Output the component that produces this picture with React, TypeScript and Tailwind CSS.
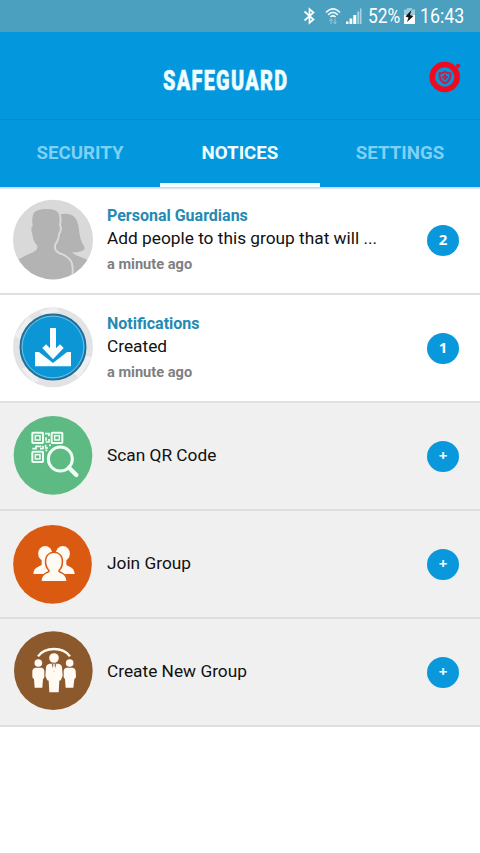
import type { ReactNode } from "react";

function StatusBar() {
  return (
    <div className="h-8 bg-[#4b9fbf] flex items-center text-white">
      <svg className="ml-[300px] h-8 w-[66px] shrink-0" viewBox="0 0 66 32" fill="none">
        {/* bluetooth */}
        <path d="M4.5 11.5L13.5 19.5L9.5 23V9L13.5 12.5L4.5 20.5" stroke="white" strokeWidth="1.7" />
        {/* wifi */}
        <path d="M26 12.5Q33 5.5 40 12.5M28.2 14.8Q33 10 37.8 14.8M30.4 17Q33 14.5 35.6 17" stroke="#e9f7fb" strokeWidth="1.7" />
        <path d="M31 19V24M29.3 20.8L31 18.8L32.7 20.8M35 18.5V23.5M33.3 21.8L35 23.8L36.7 21.8" stroke="#94cbe0" strokeWidth="1" />
        {/* signal */}
        <path d="M46 21.5H48.5V24H46zM49.5 18.5H52.3V24H49.5zM53.3 15H56.3V24H53.3z" fill="white" />
        <path d="M57.3 11.5H59.3V24H57.3zM60 8.5H61.5V24H60z" fill="#a9d3e3" />
      </svg>
      <span className="w-[36px] ml-[2px] text-[20px] leading-8 origin-left scale-x-[0.87] whitespace-nowrap">52%</span>
      <svg className="h-8 w-[14px] shrink-0" viewBox="0 0 14 32">
        <path d="M3 8H8V9.5H11V24H0V9.5H3z" fill="#9ccbdc" />
        <path d="M0 15H11V24H0z" fill="white" />
        <path d="M7.5 10L1.5 16.5L4.5 17.5L3 22L9.5 16L6 15z" fill="#10151a" />
      </svg>
      <span className="ml-[2px] text-[20px] leading-8 origin-left scale-x-[0.89] whitespace-nowrap">16:43</span>
    </div>
  );
}

function Header() {
  return (
    <div className="h-[88px] flex items-center border-b border-[#078bd0]">
      <h1 className="ml-[163px] mt-[10px] w-[263px] text-[27.5px] leading-[36px] font-black tracking-[1.8px] text-[#f0fdff] origin-left scale-x-[0.722] whitespace-nowrap [-webkit-text-stroke:0.5px_#f0fdff]">
        SAFEGUARD
      </h1>
      <svg className="ml-[1px] mt-[3px] w-[38px] h-[38px]" viewBox="0 0 38 38" fill="none">
        <circle cx="17.7" cy="19" r="12.5" stroke="#ed0b20" strokeWidth="5.6" />
        <path d="M29 7.3L31.2 6L33.3 7.5L31 10.2z" fill="#ed0b20" stroke="#ed0b20" />
        <path d="M12.5 15.2Q15.5 15.5 18 13.7Q20.5 15.5 23.5 15.2Q24 22.8 18 25.2Q12 22.8 12.5 15.2z" stroke="#c41f45" strokeWidth="2" />
        <path d="M18 16.3V22.3M15 19.3H21" stroke="#c41f45" strokeWidth="2" />
      </svg>
    </div>
  );
}

const tabs = [
  { label: "SECURITY", active: false },
  { label: "NOTICES", active: true },
  { label: "SETTINGS", active: false },
];

function Tabs() {
  return (
    <div className="flex h-[67px]">
      {tabs.map((t) => (
        <div
          key={t.label}
          className={`flex-1 flex items-center justify-center border-b-4 text-[18.7px] font-bold ${
            t.active ? "border-[#f4fffd] text-[#f4fffd]" : "border-transparent text-[#7fd0f5]"
          }`}
        >
          <span className="mt-[3px]">{t.label}</span>
        </div>
      ))}
    </div>
  );
}

function GuardiansIcon() {
  return (
    <svg className="w-[107px] h-[106px] shrink-0" viewBox="0 -9 321 318">
      <clipPath id="guardians">
        <circle cx="159" cy="149" r="119" />
      </clipPath>
      <circle cx="159" cy="149" r="120" fill="#d9d9d9" />
      <g clipPath="url(#guardians)">
        <path d="M180 73Q204 68 219 77Q235 89 237 121Q240 151 252 168Q258 178 246 183Q232 188 215 187Q219 193 240 200Q262 207 277 220V275H217V235Q217 215 195 198L165 178Z" fill="#b3b3b3" />
        <path
          d="M40 280V213Q70 196 91 187Q111 181 109 168Q96 155 94 132Q91 126 91 118Q91 110 95 106Q91 82 99 67Q110 54 139 54Q169 54 178 68Q184 83 180 107Q184 110 182 120Q181 129 177 132Q176 151 166 163Q161 181 177 189Q200 197 210 209Q218 219 218 240V280Z"
          fill="#b3b3b3"
          stroke="#d9d9d9"
          strokeWidth="6"
        />
      </g>
    </svg>
  );
}

function NotificationsIcon() {
  return (
    <svg className="w-[107px] h-[106px] shrink-0" viewBox="0 0 321 318">
      <clipPath id="notifications">
        <circle cx="159" cy="157" r="120" />
      </clipPath>
      <circle cx="159" cy="157" r="120" fill="#e2e3e4" />
      <path d="M45 120L85 63L99 79L59 135ZM220 235L261 182L276 187L237 249ZM116 50L164 37L181 49L136 59ZM65 223L78 214L119 257L100 262Z" fill="#eeeff0" clipPath="url(#notifications)" />
      <circle cx="159" cy="156" r="98" fill="#0d96d6" stroke="#286b8f" strokeWidth="5" />
      <circle cx="159" cy="156" r="92.5" fill="none" stroke="#70bfe3" strokeWidth="3" />
      <path d="M105 171H213V214H105z" fill="#f8fdff" />
      <path d="M113 168L159 204L205 168L190 147H127Z" fill="#0d96d6" />
      <path d="M150 99H168V160L180 148L191 159L159 193L127 159L138 148L150 160Z" fill="#f8fdff" />
    </svg>
  );
}

function ScanIcon() {
  return (
    <svg className="w-[107px] h-[106px] shrink-0" viewBox="0 -6 321 318" fill="none">
      <circle cx="159" cy="151" r="118" fill="#5cba82" />
      <g stroke="#effff5" strokeWidth="6">
        <rect x="97" y="83" width="32" height="31" rx="2" />
        <rect x="155" y="83" width="32" height="31" rx="2" />
        <rect x="97" y="140" width="32" height="31" rx="2" />
        <rect x="106" y="92" width="14" height="13" strokeWidth="4.5" />
        <rect x="164" y="92" width="14" height="13" strokeWidth="4.5" />
        <rect x="106" y="149" width="14" height="13" strokeWidth="4.5" />
        <path d="M135 86H147V94M138 97V107M147 102V111H137M97 131H108V124H124M120 131H129V122M137 119V129H144M150 118V124M142 136H136" strokeWidth="5" />
      </g>
      <circle cx="181" cy="162" r="36" fill="#5cba82" stroke="#effff5" strokeWidth="9" />
      <path d="M207 188L229 210" stroke="#effff5" strokeWidth="13" strokeLinecap="round" />
    </svg>
  );
}

const person =
  "M162 129C148 129 138 139 139 156C139 167 144 176 149 180V185C144 191 126 190 125 213H199C198 190 180 191 175 185V180C180 176 185 167 185 156C186 139 176 129 162 129Z";

function JoinIcon() {
  return (
    <svg className="w-[107px] h-[106px] shrink-0" viewBox="0 3 321 318">
      <circle cx="157.5" cy="163" r="118" fill="#db5a12" />
      <g fill="#fffaf4">
        <ellipse cx="135.5" cy="131" rx="21" ry="23" />
        <ellipse cx="188.5" cy="131" rx="21" ry="23" />
        <path d="M125 150V164C119 170 101 170 100 192H162V150Z" />
        <path d="M199 150V164C205 170 223 170 224 192H162V150Z" />
        <path d={person} stroke="#db5a12" strokeWidth="9" />
        <path d={person} />
      </g>
    </svg>
  );
}

function CreateIcon() {
  return (
    <svg className="w-[107px] h-[106px] shrink-0" viewBox="0 3 321 318">
      <circle cx="160" cy="158" r="118" fill="#8b592c" />
      <path d="M114 115Q130 93 162 93Q194 93 210 115" fill="none" stroke="#fffaf4" strokeWidth="7" />
      <g fill="#fffaf4">
        <circle cx="162" cy="120" r="14.5" />
        <circle cx="115" cy="135" r="11.5" />
        <circle cx="209" cy="135" r="11.5" />
        <path d="M149 137H175Q185 139 186 148L188 174L182 187L178 188L176 223H148L146 188L142 187L136 174L138 148Q139 139 149 137Z" />
        <path d="M106 149H125Q132 151 133 158V178L129 184L127 209H104L102 184L97 178V158Q98 151 106 149Z" />
        <path d="M199 149H218Q226 151 227 158L228 178L223 184L220 209H197L195 184L191 178V158Q192 151 199 149Z" />
      </g>
      <path d="M155 137L162 163L169 137L162 141Z" fill="#8b592c" />
      <path d="M160 141H164L166 155L162 161L158 155Z" fill="#fffaf4" />
    </svg>
  );
}

function Badge({ children }: { children: ReactNode }) {
  return (
    <span className="ml-auto mr-[21px] mt-[1px] w-8 h-[31px] rounded-[50%] bg-[#0998dc] text-white text-[15px] font-bold flex items-center justify-center font-['Open_Sans',sans-serif]">
      <span className="-mt-[2px]">{children}</span>
    </span>
  );
}

const notices = [
  { title: "Personal Guardians", text: "Add people to this group that will ...", time: "a minute ago", count: 2, icon: <GuardiansIcon /> },
  { title: "Notifications", text: "Created", time: "a minute ago", count: 1, icon: <NotificationsIcon /> },
];

const actions = [
  { label: "Scan QR Code", icon: <ScanIcon /> },
  { label: "Join Group", icon: <JoinIcon /> },
  { label: "Create New Group", icon: <CreateIcon /> },
];

export default function App() {
  return (
    <div className="w-[480px] h-[853px] bg-white overflow-hidden font-[Roboto,sans-serif]">
      <StatusBar />
      <div className="bg-[#0397dd]">
        <Header />
        <Tabs />
      </div>

      {/* Notices */}
      <div className="bg-[linear-gradient(#bfd3e0,#ffffff_3px)]">
        {notices.map((n) => (
          <div key={n.title} className="h-[108px] flex items-center border-b-2 border-[#e0e0e0]">
            {n.icon}
            <div className="whitespace-nowrap pt-[3px]">
              <p className="text-[16px] leading-[20px] font-bold text-[#2489b3]">{n.title}</p>
              <p className="text-[17.3px] leading-[25px] text-[#111]">{n.text}</p>
              <p className="text-[14.6px] leading-[27px] font-bold text-[#808080]">{n.time}</p>
            </div>
            <Badge>{n.count}</Badge>
          </div>
        ))}
      </div>

      {/* Actions */}
      {actions.map((a) => (
        <div key={a.label} className="h-[108px] flex items-center bg-[#f0f0f0] border-b-2 border-[#dedede]">
          {a.icon}
          <p className="text-[17.3px] text-[#111] whitespace-nowrap">{a.label}</p>
          <Badge>+</Badge>
        </div>
      ))}
    </div>
  );
}
